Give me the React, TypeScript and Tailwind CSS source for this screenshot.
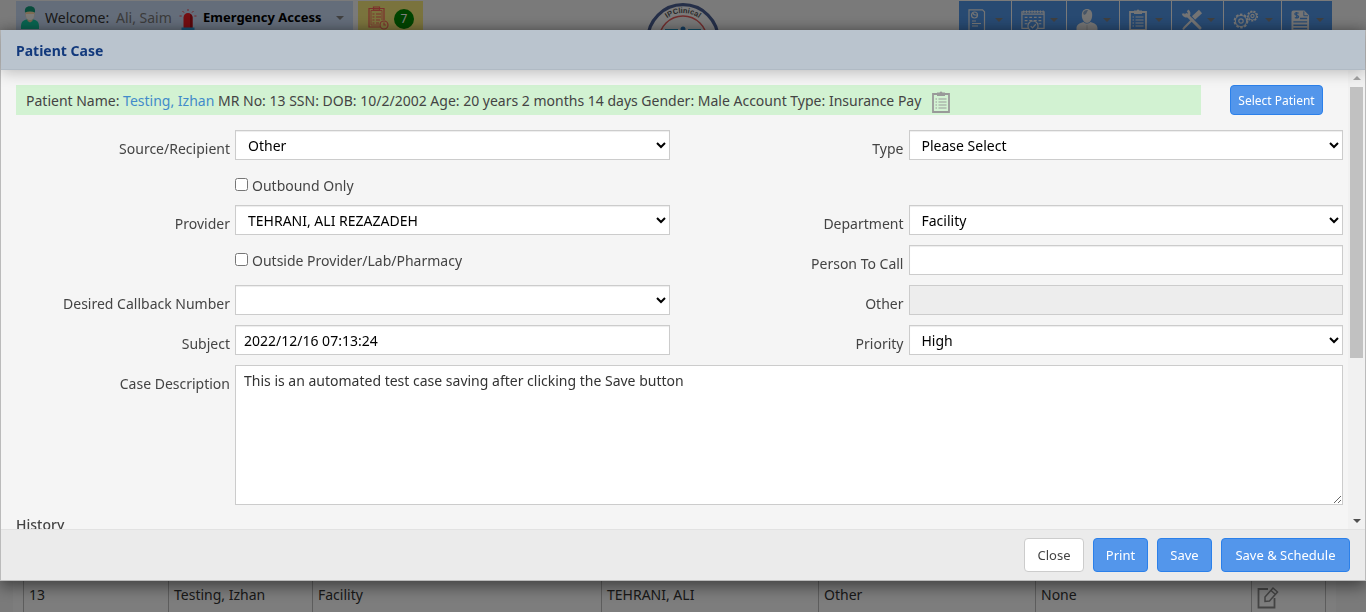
import type { ReactNode } from 'react';

const primary =
  'rounded border border-[#2b80ea] bg-[#5396eb] text-white cursor-pointer';

function Caret() {
  return <span className="h-0 w-0 border-x-4 border-t-4 border-x-transparent border-t-[#808080]" />;
}

function ClipboardIcon() {
  return (
    <svg width="18" height="22" viewBox="0 0 18 22" fill="none" stroke="currentColor" aria-hidden="true">
      <path d="M1 3h16v18H1z" strokeWidth="1.8" />
      <path d="M5 1.5h2.5L9 .2l1.500 1.300H13V5H5z" fill="currentColor" stroke="none" />
      <path d="M6.500 8h8M6.500 11h8M6.500 14h8M6.500 17h8" strokeWidth="1.200" />
      <path d="M3.500 8h1.500M3.500 11h1.500M3.500 14h1.500M3.500 17h1.500" strokeWidth="1.200" />
    </svg>
  );
}

function ReportIcon() {
  return (
    <svg width="18" height="24" viewBox="0 0 18 24" fill="none" stroke="currentColor" strokeWidth="1.200" aria-hidden="true">
      <path d="M1 .8h13.500l2 2V23H1z" />
      <circle cx="6.500" cy="6" r="3" />
      <path d="M6.500 6 4.500 4M6.500 6h3M4 12h4M4 14.500h9M4 17h6" />
    </svg>
  );
}

function CalendarIcon() {
  return (
    <svg width="24" height="24" viewBox="0 0 26 24" fill="none" stroke="currentColor" strokeWidth="1.300" aria-hidden="true">
      <path d="M1 2h24v18H1zM1 4.500h24" />
      <path d="M3 .5v3M6 .5v3M9 .5v3M12 .5v3M15 .5v3M18 .5v3M21 .5v3M24 .5v3" strokeWidth="1" />
      <path d="M4 8h18M4 11.500h18M4 15h18" strokeDasharray="3 2" />
      <circle cx="13" cy="17.500" r="5.500" fill="#5094e4" />
      <path d="m10.500 17.500 2 2 3.500-4" />
    </svg>
  );
}

function UserIcon() {
  return (
    <svg width="22" height="24" viewBox="0 0 22 24" fill="currentColor" aria-hidden="true">
      <path d="M11 0c3.300 0 5.200 2.300 5.200 6 0 4.500-2.400 8-5.200 8S5.800 10.500 5.800 6C5.800 2.300 7.700 0 11 0z" />
      <path d="M7.500 13c2.500 2 4.500 2 7 0 4 1 7 2.500 7 6.500V24H.5v-4.500c0-4 3-5.500 7-6.500z" />
      <path d="M7 4c1-2.500 3-3.500 5-3l-2 4-2 1z" fill="#8aa8cc" />
      <path d="M10.500 16h1v6h-1z" fill="#c4c4c4" />
    </svg>
  );
}

function ToolsIcon() {
  return (
    <svg width="22" height="22" viewBox="0 0 22 22" fill="none" stroke="currentColor" aria-hidden="true">
      <path d="M5.500 5.500 19 19" strokeWidth="3" strokeLinecap="round" />
      <path d="M2 4.500a3.500 3.500 0 0 0 5.500 2A3.500 3.500 0 0 0 6.500 1.500" strokeWidth="2.600" />
      <path d="m19.500 2.500-7 6.500" strokeWidth="4.600" />
      <path d="m12 10-8.500 8.500-1.500 2" strokeWidth="2" />
    </svg>
  );
}

function GearsIcon() {
  return (
    <svg width="26" height="20" viewBox="0 0 26 20" fill="none" stroke="currentColor" aria-hidden="true">
      <circle cx="8" cy="12" r="6.500" strokeWidth="1.800" strokeDasharray="2.600 1.500" />
      <circle cx="8" cy="12" r="5.600" strokeWidth="1" />
      <circle cx="8" cy="12" r="2.200" strokeWidth="1.200" />
      <circle cx="19.500" cy="7" r="4.800" strokeWidth="1.600" strokeDasharray="2 1.300" />
      <circle cx="19.500" cy="7" r="4" strokeWidth="0.900" />
      <circle cx="19.500" cy="7" r="1.600" strokeWidth="1.100" />
    </svg>
  );
}

function BillIcon() {
  return (
    <svg width="19" height="22" viewBox="0 0 20 22" aria-hidden="true">
      <path d="M2.500 1H14l5 5v16H.5V3a2 2 0 0 1 2-2z" fill="currentColor" />
      <path d="M13.500 2v4.500H18" fill="none" stroke="#5094e4" />
      <path d="M8 3.800C5.500 3 4 3.500 4 4.800c0 1.600 4 1 4 2.700 0 1.400-2 1.800-4 .8M6 2.500v7" fill="none" stroke="#5094e4" strokeWidth="1.200" />
      <path d="M9.500 9.500H17M2.500 13H17M2.500 16.500H17M2.500 20H17" stroke="#5094e4" strokeWidth="1.500" />
    </svg>
  );
}

function Avatar() {
  return (
    <svg width="20" height="23" viewBox="0 0 20 23" aria-hidden="true">
      <path d="M1 23c-.6-7 2-9 6-9.500h6c4 .5 6.600 2.500 6 9.500z" fill="#14c8a0" />
      <path d="M7.500 12h5v3l-2.500 1.500L7.500 15z" fill="#f0c8a0" />
      <path d="M5.500 5h9v3.500c0 3.500-2.300 5.500-4.500 5.500s-4.500-2-4.500-5.500z" fill="#ffd8a8" />
      <path d="M6 8h8v1.500c0 3-2 4.500-4 4.500s-4-1.500-4-4.500z" fill="#f4f4f0" />
      <path d="M5 6.500C4.500 2.500 6 .3 10 .3s5.500 2.200 5 6.200c-3-1.300-7-1.300-10 0z" fill="#109878" />
    </svg>
  );
}

function Siren() {
  return (
    <svg width="18" height="21" viewBox="0 0 18 21" aria-hidden="true">
      <path d="M4.500 19V8.500C4.500 5.800 6.500 4 9 4s4.500 1.800 4.500 4.500V19z" fill="#e81c24" />
      <path d="M11 5v14h2.500V8.500C13.500 6.500 12.500 5.500 11 5z" fill="#b01018" />
      <path d="M9 0v2M3.500 2l1.500 1.600M14.500 2 13 3.600M.5 7h2.200M15.300 7h2.200" stroke="#e84850" />
      <path d="M2.500 18.500h13V21h-13z" fill="#30a0e0" />
    </svg>
  );
}

function TaskIcon() {
  return (
    <svg width="21" height="24" viewBox="0 0 21 24" fill="none" stroke="#f86058" strokeWidth="1.200" aria-hidden="true">
      <path d="M12 21H1V2.500h15V14" />
      <path d="M3 4.500h11V14M3 4.500V19h8" strokeWidth=".8" />
      <path d="M5.500 1h6v3h-6z" />
      <path d="M4.500 8h2M4.500 11h2M4.500 14h2M4.500 17h2M8 8h5M8 11h5M8 14h4M8 17h3" />
      <circle cx="16" cy="19" r="4" />
      <path d="M16 16.500V19h2" />
    </svg>
  );
}

function Logo() {
  return (
    <svg width="76" height="76" viewBox="0 0 76 76" role="img" aria-label="IPClinical">
      <defs>
        <path id="ring" d="M11 38a27 27 0 0 1 54 0" />
      </defs>
      <circle cx="38" cy="38" r="35.300" fill="#f6f6f6" stroke="#4b5f92" strokeWidth="3.200" />
      <circle cx="38" cy="38" r="24" fill="#eee" stroke="#e05a5a" strokeWidth="1.500" />
      <path d="M20 27h13v4H20zM43 27h13v4H43z" fill="#2b9bc8" />
      <circle cx="38" cy="27" r="2.500" fill="#2b78b8" />
      <text fill="#555" fontSize="7.500" fontWeight="bold" fontFamily="Liberation Sans, sans-serif" textAnchor="middle">
        <textPath href="#ring" startOffset="50%">IPClinical</textPath>
      </text>
    </svg>
  );
}

function EditIcon() {
  return (
    <svg width="22" height="23" viewBox="0 0 22 23" fill="none" stroke="#888" strokeWidth="1.800" aria-hidden="true">
      <path d="M11 3H1.500v18.500h16V12" />
      <path d="m8 11 8-9 4.500 4-8 9L8 15.500zM14 4.500l4.500 4" strokeWidth="1.500" />
    </svg>
  );
}

const tools: { name: string; icon: ReactNode; width: string }[] = [
  { name: 'Reports', icon: <ReportIcon />, width: 'w-[52px]' },
  { name: 'Schedule', icon: <CalendarIcon />, width: 'w-[54px]' },
  { name: 'Patients', icon: <UserIcon />, width: 'w-[52px]' },
  { name: 'Cases', icon: <ClipboardIcon />, width: 'w-[51px]' },
  { name: 'Tools', icon: <ToolsIcon />, width: 'w-[51px]' },
  { name: 'Settings', icon: <GearsIcon />, width: 'w-[57px]' },
  { name: 'Billing', icon: <BillIcon />, width: 'w-[50px]' },
];

const field = 'h-[30px] w-full rounded-none border border-[#ccc] bg-white text-sm text-black shadow-[inset_0_1px_1px_rgba(0,0,0,0.075)]';

function Label({ id, children }: { id: string; children: ReactNode }) {
  return (
    <label htmlFor={id} className="pt-[9px] text-right leading-5">
      {children}
    </label>
  );
}

function Select({ id, options }: { id: string; options: string[] }) {
  return (
    <select id={id} className={`${field} pl-2`}>
      {options.map((o) => (
        <option key={o}>{o}</option>
      ))}
    </select>
  );
}

function Check({ id, children }: { id: string; children: ReactNode }) {
  return (
    <div className="col-start-2 flex items-start gap-1 pt-[6px] leading-5">
      <input id={id} type="checkbox" className="mt-[2px] h-[13px] w-[13px]" />
      <label htmlFor={id}>{children}</label>
    </div>
  );
}

function Page() {
  return (
    <div className="flex h-screen flex-col justify-between overflow-hidden bg-[#f4f4f4] text-[#333]">
      <header className="grid grid-cols-[1fr_76px_1fr] items-start px-4 pt-px">
        <div className="flex gap-[5px]">
          <div className="flex h-9 w-[337px] items-start bg-[#c8daf4] pl-1 leading-[34px] whitespace-nowrap">
            <span className="mt-[5px] w-[25px]"><Avatar /></span>
            <span className="w-[71px]">Welcome:</span>
            <span className="w-[63px] text-[#777]">Ali, Saim</span>
            <span className="mt-2"><Siren /></span>
            <button className="ml-1.5 flex items-center gap-[14px] text-[13px] leading-[33px] font-bold text-black">
              Emergency Access
              <Caret />
            </button>
          </div>
          <div className="flex h-9 w-[65px] items-start gap-[5px] bg-[#f4e67a] pt-[5px] pl-[10px]">
            <TaskIcon />
            <span className="mt-[3px] flex h-5 w-5 items-center justify-center rounded-full bg-[#008800] text-xs text-white">7</span>
          </div>
        </div>
        <div className="mt-px h-[76px]"><Logo /></div>
        <nav className="mr-[18px] flex justify-end gap-px">
          {tools.map((t) => (
            <button key={t.name} aria-label={t.name} className={`${t.width} flex h-9 items-start justify-between bg-[#5094e4] pt-2 pr-2 pl-[9px] text-[#e8e8e8]`}>
              {t.icon}
              <span className="mt-[9px] flex"><Caret /></span>
            </button>
          ))}
        </nav>
      </header>
      <div className="mr-[30px] ml-[13px] bg-[#fafafa] px-[10px]">
        <table className="w-full table-fixed border-collapse">
          <tbody>
            <tr className="h-[34px] [&>td]:border-x [&>td]:border-[#bbb] [&>td]:px-[5px]">
              <td className="w-[145px]">13</td>
              <td className="w-[144px]">Testing, Izhan</td>
              <td>Facility</td>
              <td className="w-[217px]">TEHRANI, ALI</td>
              <td className="w-[217px]">Other</td>
              <td className="w-[216px]">None</td>
              <td className="w-[74px]">
                <a href="#edit" aria-label="Edit case" className="block pt-1"><EditIcon /></a>
              </td>
            </tr>
          </tbody>
        </table>
      </div>
    </div>
  );
}

export default function App() {
  return (
    <div className="font-['Noto_Sans',sans-serif] text-sm text-[#444]">
      <Page />
      <div className="fixed inset-0 flex flex-col bg-black/50 pt-[30px] pb-[31px]">
        <div role="dialog" aria-labelledby="title" className="flex min-h-0 flex-1 flex-col border-x border-b border-[#bbb] bg-[#f5f5f5] shadow-[0_5px_15px_rgba(0,0,0,0.5)]">
          <div className="z-10 border-b border-[#b0bac4] bg-[#bac4ce] px-[15px] shadow-[0_2px_15px_rgba(0,0,0,0.25)]">
            <h2 id="title" className="pt-[3px] text-sm leading-9 font-bold text-[#12397c]">Patient Case</h2>
          </div>
          <div className="flex min-h-0 flex-1">
            <div className="min-w-0 flex-1 overflow-y-auto pt-[15px] pl-[15px] [scrollbar-width:none]">
              <div className="flex items-center gap-[29px] pr-[25px]">
                <div className="flex h-[30px] flex-1 items-center gap-[11px] bg-[#d2f2d2] pl-[10px]">
                  <p className="pt-[2px]">
                    Patient Name: <a href="#patient" className="text-[#428bca]">Testing, Izhan</a> MR No: 13 SSN: DOB: 10/2/2002 Age: 20 years 2 months 14 days Gender: Male Account Type: Insurance Pay
                  </p>
                  <button aria-label="Patient details" className="pt-1 text-[#999]"><ClipboardIcon /></button>
                </div>
                <button className={`${primary} h-[30px] w-[93px] pt-px text-xs`}>Select Patient</button>
              </div>
              <form className="mt-[15px] grid grid-cols-[214px_1fr_229px_1fr] grid-rows-[30px_25px_30px_30px_30px_30px_140px] gap-x-[5px] gap-y-[10px] pr-[5px]">
                <Label id="source">Source/Recipient</Label>
                <Select id="source" options={['Other']} />
                <Label id="type">Type</Label>
                <Select id="type" options={['Please Select']} />
                <Check id="outbound">Outbound Only</Check>
                <div className="col-span-2" />
                <Label id="provider">Provider</Label>
                <Select id="provider" options={['TEHRANI, ALI REZAZADEH']} />
                <Label id="department">Department</Label>
                <Select id="department" options={['Facility']} />
                <Check id="outside">Outside Provider/Lab/Pharmacy</Check>
                <Label id="person">Person To Call</Label>
                <input id="person" type="text" className={`${field} px-2`} />
                <Label id="callback">Desired Callback Number</Label>
                <Select id="callback" options={['']} />
                <Label id="other">Other</Label>
                <input id="other" type="text" disabled className="h-[30px] w-full border border-[#ccc] bg-[#ededed] px-2" />
                <Label id="subject">Subject</Label>
                <input id="subject" type="text" defaultValue="2022/12/16 07:13:24" className={`${field} px-2`} />
                <Label id="priority">Priority</Label>
                <Select id="priority" options={['High']} />
                <Label id="description">Case Description</Label>
                <textarea
                  id="description"
                  defaultValue="This is an automated test case saving after clicking the Save button"
                  className="col-span-3 resize border border-[#ccc] bg-white px-2 py-[5px] text-sm leading-5 text-[#333]"
                />
              </form>
              <h3 className="mt-[10px] h-10 leading-5 font-medium">History</h3>
            </div>
            <div aria-hidden="true" className="flex w-[17px] flex-col items-center justify-between bg-[#f1f1f1] py-[6px]">
              <span className="h-0 w-0 border-x-4 border-b-4 border-x-transparent border-b-[#a3a3a3]" />
              <span className="mt-[7px] mb-auto h-[271px] w-[13px] bg-[#c1c1c1]" />
              <span className="h-0 w-0 border-x-4 border-t-4 border-x-transparent border-t-[#505050]" />
            </div>
          </div>
          <div className="flex h-[51px] items-start justify-end gap-[9px] border-t border-[#e2e2e2] bg-[#ebebeb] pt-2 pr-[15px]">
            <button className="h-[34px] w-[60px] cursor-pointer rounded border border-[#ccc] bg-white text-[13px]">Close</button>
            <button className={`${primary} h-[34px] w-[55px] text-[13px]`}>Print</button>
            <button className={`${primary} h-[34px] w-[55px] text-[13px]`}>Save</button>
            <button className={`${primary} h-[34px] w-[129px] text-[13px]`}>Save &amp; Schedule</button>
          </div>
        </div>
      </div>
    </div>
  );
}
